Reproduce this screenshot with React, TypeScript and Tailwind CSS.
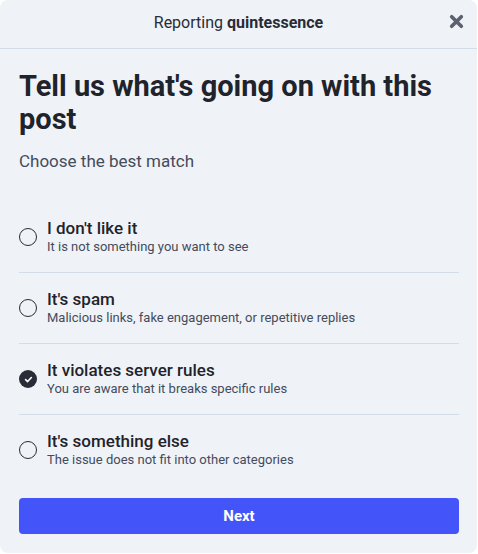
import { useState } from "react"

const options = [
  { id: "dislike", title: "I don't like it", desc: "It is not something you want to see" },
  { id: "spam", title: "It's spam", desc: "Malicious links, fake engagement, or repetitive replies" },
  { id: "violation", title: "It violates server rules", desc: "You are aware that it breaks specific rules" },
  { id: "other", title: "It's something else", desc: "The issue does not fit into other categories" },
]

function Radio({ checked }: { checked: boolean }) {
  if (checked) {
    return (
      <span className="flex h-[18px] w-[18px] shrink-0 items-center justify-center rounded-full bg-[#282c37]">
        <svg width="9" height="9" viewBox="0 0 10 10" fill="none">
          <path d="M1.8 5.2 L4 7.3 L8.2 2.8" stroke="white" strokeWidth="1.8" strokeLinecap="round" strokeLinejoin="round" />
        </svg>
      </span>
    )
  }
  return <span className="h-[18px] w-[18px] shrink-0 rounded-full border-[1.5px] border-[#282c37]" />
}

export default function App() {
  const [selected, setSelected] = useState("violation")

  return (
    <div className="w-[478px] h-[554px] bg-white" style={{ fontFamily: "Roboto, 'Liberation Sans', sans-serif" }}>
      <div className="w-[477px] h-[553px] rounded-lg bg-[#eff3f7] text-[#282c37] flex flex-col">
        {/* HEADER */}
        <div className="relative h-[49px] shrink-0 flex items-center justify-center border-b border-[#d3dde7]">
          <span className="text-[16px] text-[#282c37] -mt-[3px]">
            Reporting <strong className="font-bold">quintessence</strong>
          </span>
          <button className="absolute right-[13px] top-[14px] text-[#5b6170]">
            <svg width="15" height="15" viewBox="0 0 14 14">
              <path d="M2.5 2.5 L11.5 11.5 M11.5 2.5 L2.5 11.5" stroke="currentColor" strokeWidth="3.4" strokeLinecap="round" />
            </svg>
          </button>
        </div>

        {/* BODY */}
        <div className="pl-[19px] pr-[18px] pt-[21px] flex flex-col flex-1">
          <h1 className="text-[29px] leading-[33px] font-bold text-[#1f232b]">
            Tell us what's going on with this post
          </h1>
          <p className="mt-[15px] text-[17px] leading-[20px] text-[#444b5d]">Choose the best match</p>

          <div className="mt-[31px] flex flex-col">
            {options.map((o, i) => (
              <button
                key={o.id}
                onClick={() => setSelected(o.id)}
                className={
                  "flex items-center gap-[10px] text-left py-[16px] " +
                  (i < options.length - 1 ? "border-b border-[#d3dde7]" : "")
                }
              >
                <Radio checked={selected === o.id} />
                <span className="flex flex-col">
                  <span className="text-[17px] leading-[20px] font-medium text-[#1f232b]">{o.title}</span>
                  <span className="text-[13px] leading-[18px] text-[#444b5d]">{o.desc}</span>
                </span>
              </button>
            ))}
          </div>

          <button className="mt-[13px] h-[36px] w-full rounded-[4px] bg-[#4354f8] text-white text-[15px] font-bold">
            Next
          </button>
        </div>
      </div>
    </div>
  )
}
